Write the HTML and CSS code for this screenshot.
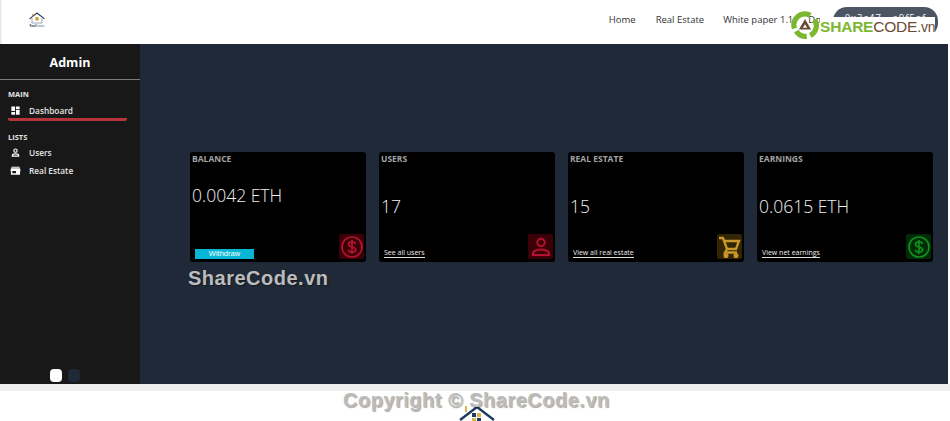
FILE: index.html

```html
<!DOCTYPE html>
<html lang="en">
<head>
  <meta charset="UTF-8" />
  <meta name="viewport" content="width=device-width, initial-scale=1.0"/>
  <title>Admin Dashboard</title>
  <link rel="stylesheet" href="styles.css">
</head>
<body>
  <header class="topbar">
    <a class="logo" href="#">
      <svg viewBox="0 0 24 14" width="20" height="12" fill="none">
        <path d="M3 8 12 1l9 7" stroke="#1f3a5f" stroke-width="1.3"/>
        <path d="M6 7v6h12V7" stroke="#8a94a3" stroke-width="1"/>
        <rect x="10" y="6" width="4" height="4" fill="#c9a13b"/>
        <rect x="6" y="2" width="1.5" height="3" fill="#c9a13b"/>
      </svg>
      <span class="logo-text"><b>Real</b>Estate</span>
    </a>
    <nav class="topnav">
      <a href="#">Home</a>
      <a href="#">Real Estate</a>
      <a class="topnav-paper" href="#">White paper 1.1</a>
      <a class="topnav-last" href="#">Docs</a>
      <button class="wallet">0x3c47...a9f5ef</button>
    </nav>
  </header>

  <div class="dashboard">
    <aside class="sidebar">
      <div class="sidebar-title">Admin</div>
      <div class="sidebar-menu">
        <p class="menu-label">MAIN</p>
        <a class="menu-item active" href="#">
          <svg viewBox="0 0 24 24" width="11" height="11" fill="#fff"><path d="M3 3h8v10H3zM13 3h8v6h-8zM13 11h8v10h-8zM3 15h8v6H3z"/></svg>
          Dashboard
        </a>
        <p class="menu-label">LISTS</p>
        <a class="menu-item" href="#">
          <svg viewBox="0 0 24 24" width="11" height="11" fill="none" stroke="#fff" stroke-width="2.4"><circle cx="12" cy="8" r="3.6"/><path d="M5 20v-1.500c0-2.500 4-3.500 7-3.500s7 1 7 3.500V20z"/></svg>
          Users
        </a>
        <a class="menu-item" href="#">
          <svg viewBox="0 0 24 24" width="11" height="11" fill="#fff"><path d="M3 4h18v2H3zM2 7h20l1 6h-1v8H2v-8H1zm3 6v5h8v-5z"/></svg>
          Real Estate
        </a>
      </div>
      <div class="theme-switch">
        <span class="swatch swatch-light"></span>
        <span class="swatch swatch-dark"></span>
      </div>
    </aside>

    <main class="content">
      <div class="cards">
        <div class="card">
          <div class="card-title">BALANCE</div>
          <div class="card-value card-value-high">0.0042 ETH</div>
          <div class="card-bottom">
            <button class="withdraw">Withdraw</button>
            <span class="card-icon icon-red">
              <svg viewBox="0 0 24 24" fill="none" stroke="currentColor" stroke-width="1.7"><circle cx="12" cy="12" r="10"/><path d="M15.500 9c-.3-1.300-1.700-2.100-3.500-2.100-2 0-3.500 1-3.500 2.500 0 3.400 7.200 1.700 7.200 5.200 0 1.500-1.600 2.500-3.700 2.500-1.900 0-3.400-.9-3.700-2.300M12 5v14"/></svg>
            </span>
          </div>
        </div>
        <div class="card">
          <div class="card-title">USERS</div>
          <div class="card-value">17</div>
          <div class="card-bottom">
            <a class="card-link" href="#">See all users</a>
            <span class="card-icon icon-red">
              <svg viewBox="0 0 24 24" fill="none" stroke="currentColor" stroke-width="2"><circle cx="12" cy="7.500" r="3.700"/><path d="M4 20v-1.500c0-2.800 5-4 8-4s8 1.200 8 4V20z"/></svg>
            </span>
          </div>
        </div>
        <div class="card">
          <div class="card-title">REAL ESTATE</div>
          <div class="card-value">15</div>
          <div class="card-bottom">
            <a class="card-link" href="#">View all real estate</a>
            <span class="card-icon icon-yellow">
              <svg viewBox="0 0 24 24" fill="none" stroke="currentColor" stroke-width="2.300"><path d="M1 3h4l4 11h9l3-8H6.500M9 14l-2 3.500h12"/><circle cx="8" cy="20.500" r="1.400" fill="currentColor"/><circle cx="18" cy="20.500" r="1.400" fill="currentColor"/></svg>
            </span>
          </div>
        </div>
        <div class="card">
          <div class="card-title">EARNINGS</div>
          <div class="card-value">0.0615 ETH</div>
          <div class="card-bottom">
            <a class="card-link" href="#">View net earnings</a>
            <span class="card-icon icon-green">
              <svg viewBox="0 0 24 24" fill="none" stroke="currentColor" stroke-width="1.7"><circle cx="12" cy="12" r="10"/><path d="M15.500 9c-.3-1.300-1.700-2.100-3.500-2.100-2 0-3.500 1-3.500 2.500 0 3.400 7.200 1.700 7.200 5.200 0 1.500-1.600 2.500-3.700 2.500-1.900 0-3.400-.9-3.700-2.300M12 5v14"/></svg>
            </span>
          </div>
        </div>
      </div>
    </main>
  </div>

  <footer class="footer">
    <svg class="footer-logo" viewBox="0 0 36 18" width="36" height="18" fill="none">
      <path d="M1 15 18 2l17 13" stroke="#1f3a5f" stroke-width="2.400"/>
      <rect x="6" y="1" width="2" height="6" fill="#d9b44a"/>
      <rect x="13" y="8" width="4" height="4" fill="#1f3a5f"/>
      <rect x="18" y="8" width="4" height="4" fill="#d9b44a"/>
      <rect x="13" y="13" width="4" height="4" fill="#d9b44a"/>
      <rect x="18" y="13" width="4" height="4" fill="#1f3a5f"/>
    </svg>
  </footer>

  <!-- watermark over the shot -->
  <div class="wm-logo">
    <svg viewBox="0 0 32 32" fill="none">
      <path d="M4 20A12.500 12.500 0 0 1 22 5" stroke="#7cb82f" stroke-width="6"/>
      <path d="M27 10a12.500 12.500 0 0 1-5 18" stroke="#7cb82f" stroke-width="6"/>
      <path d="M18 29A12.500 12.500 0 0 1 6 23" stroke="#7cb82f" stroke-width="6"/>
      <path d="M16 9l7 12H9z" fill="#6b4a32"/>
      <path d="M16 15l2.500 4h-5z" fill="#fff"/>
    </svg>
    <span class="wm-text"><b>SHARE</b>CODE<i>.vn</i></span>
  </div>
  <div class="wm-mid">ShareCode.vn</div>
  <div class="wm-copy">Copyright © ShareCode.vn</div>
</body>
</html>
```

FILE: styles.css

```css
html, body {
  margin: 0;
  height: 421px;
  overflow: hidden;
}

body {
  font-family: 'Open Sans', 'Noto Sans', sans-serif;
  background: #fff;
  position: relative;
}

a {
  text-decoration: none;
  color: inherit;
}

.topbar {
  height: 44px;
  display: flex;
  align-items: flex-start;
  justify-content: space-between;
  padding: 0 12px 0 27px;
  box-sizing: border-box;
  box-shadow: inset 2px 0 2px -1px #ddd;
}

.logo {
  display: flex;
  flex-direction: column;
  align-items: center;
  margin-top: 12px;
  width: 20px;
}

.logo-text {
  font-size: 3px;
  line-height: 4px;
  color: #3d4a5c;
  white-space: nowrap;
}

.topnav {
  display: flex;
  align-items: flex-start;
  gap: 20px;
  font-size: 9.500px;
  line-height: 13px;
  color: #333;
  padding-top: 13px;
}

.topnav-paper {
  margin-left: -1px;
}

.topnav-last {
  margin-left: -5px;
}

.wallet {
  width: 105px;
  height: 30px;
  margin: -6px 0 0 -17px;
  border: none;
  border-radius: 14px;
  background: #4b5563;
  color: #fff;
  font-family: inherit;
  font-size: 9.500px;
  letter-spacing: 1px;
  padding: 0 0 10px;
}

.dashboard {
  display: flex;
  height: 340px;
  margin-right: 2px;
}

.sidebar {
  width: 140px;
  flex-shrink: 0;
  background: #181818;
  color: #fff;
  display: flex;
  flex-direction: column;
}

.sidebar-title {
  height: 35px;
  line-height: 37px;
  text-align: center;
  font-size: 12.500px;
  font-weight: 700;
  border-bottom: 1px solid #7a7a7a;
}

.sidebar-menu {
  flex: 1;
  padding: 8px 13px 0 8px;
}

.menu-label {
  margin: 0;
  font-size: 7.500px;
  font-weight: 700;
  line-height: 12px;
  color: #e5e5e5;
}

.menu-item {
  display: flex;
  align-items: center;
  gap: 8px;
  height: 18px;
  padding-left: 2px;
  font-size: 8.300px;
  font-weight: 600;
  color: #e5e5e5;
}

.menu-item.active {
  height: 19px;
  border-bottom: 3px solid #b5353a;
  border-radius: 2px;
  margin: 2px 0 10px;
  padding-top: 1px;
  box-sizing: border-box;
}

.theme-switch {
  display: flex;
  justify-content: center;
  gap: 6px;
  padding: 0 10px 2px 0;
}

.swatch {
  width: 12px;
  height: 13px;
  border-radius: 4px;
}

.swatch-light {
  background: #fff;
}

.swatch-dark {
  background: #1f2937;
}

.content {
  flex: 1;
  background: #1f2937;
  padding: 108px 15px 0 50px;
}

.cards {
  display: grid;
  grid-template-columns: repeat(4, 176px);
  gap: 13px;
}

.card {
  height: 110px;
  box-sizing: border-box;
  background: #000;
  border-radius: 3px;
  padding: 0 2px 3px 2px;
  color: #e5e7eb;
  display: flex;
  flex-direction: column;
}

.card-title {
  font-size: 8.500px;
  font-weight: 700;
  line-height: 13px;
  color: #a3a3a3;
}

.card-value {
  flex: 1;
  font-size: 17.500px;
  line-height: 24px;
  font-weight: 300;
  color: #f0f0f0;
  padding-top: 29px;
  box-sizing: border-box;
}

.card-value-high {
  padding-top: 18px;
}

.card-bottom {
  display: flex;
  align-items: flex-end;
  justify-content: space-between;
  padding-left: 3px;
}

.card-link {
  font-size: 7px;
  line-height: 9px;
  color: #eee;
  border-bottom: 1px solid #ddd;
  margin: 0 0 1px 0;
}

.withdraw {
  width: 59px;
  height: 10px;
  padding: 0;
  border: none;
  background: #06b6d4;
  color: #fff;
  font-family: 'Liberation Sans', sans-serif;
  font-size: 7.500px;
  line-height: 10px;
}

.card-icon {
  width: 25px;
  height: 25px;
  display: flex;
  align-items: center;
  justify-content: center;
  border-radius: 2px;
}

.card-icon svg {
  width: 24px;
  height: 24px;
}

.icon-red {
  background: #3b0007;
  color: #b4122e;
}

.icon-yellow {
  background: #332504;
  color: #c9982a;
}

.icon-green {
  background: #002b05;
  color: #0f8f1e;
}

.footer {
  height: 37px;
  box-sizing: border-box;
  border-top: 7px solid #eeeeee;
  position: relative;
  overflow: hidden;
}

.footer-logo {
  position: absolute;
  left: 459px;
  top: 14px;
}

.wm-logo {
  position: absolute;
  left: 791px;
  top: 11px;
  display: flex;
  align-items: flex-end;
  gap: 1px;
  height: 28px;
}

.wm-logo svg {
  width: 28px;
  height: 28px;
}

.wm-text {
  font-family: 'Liberation Sans', sans-serif;
  font-size: 15.500px;
  line-height: 19px;
  letter-spacing: -0.200px;
  color: #6b4a32;
  background: #fff;
  margin-bottom: 2px;
}

.wm-text b {
  color: #7cb82f;
  font-weight: 700;
}

.wm-text i {
  font-style: normal;
  font-size: 14px;
}

.wm-mid,
.wm-copy {
  position: absolute;
  font-family: 'Liberation Sans', sans-serif;
  font-weight: 700;
  font-size: 20px;
  line-height: 22px;
  letter-spacing: 0.500px;
  white-space: nowrap;
  color: #bcbcbc;
  text-shadow: 1px 1px 1px rgba(0, 0, 0, 0.35);
}

.wm-mid {
  left: 188px;
  top: 267px;
}

.wm-copy {
  left: 343px;
  top: 389px;
}
```
